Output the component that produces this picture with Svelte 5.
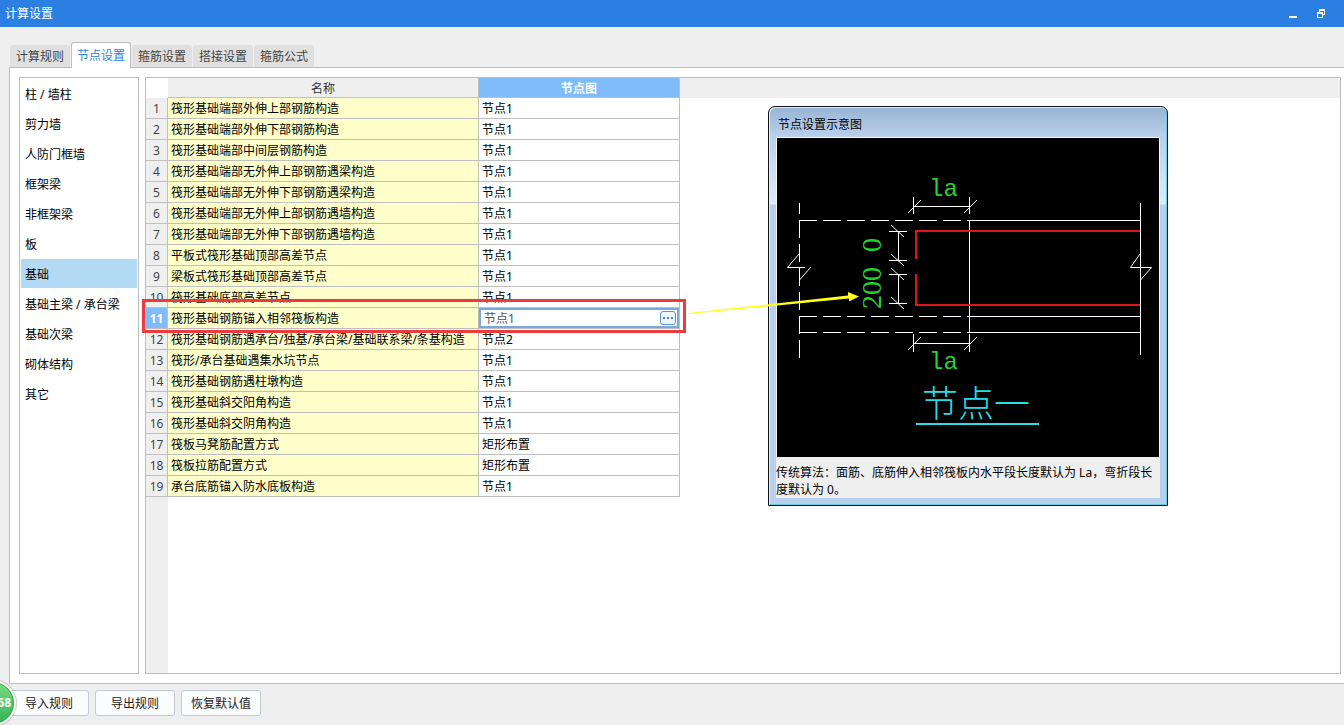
<script lang="ts">
    type Row = { name: string; value: string }

    const tabs = ['计算规则', '节点设置', '箍筋设置', '搭接设置', '箍筋公式']
    const categories = [
        '柱 / 墙柱', '剪力墙', '人防门框墙', '框架梁', '非框架梁', '板',
        '基础', '基础主梁 / 承台梁', '基础次梁', '砌体结构', '其它',
    ]

    let rows = $state<Row[]>([
        { name: '筏形基础端部外伸上部钢筋构造', value: '节点1' },
        { name: '筏形基础端部外伸下部钢筋构造', value: '节点1' },
        { name: '筏形基础端部中间层钢筋构造', value: '节点1' },
        { name: '筏形基础端部无外伸上部钢筋遇梁构造', value: '节点1' },
        { name: '筏形基础端部无外伸下部钢筋遇梁构造', value: '节点1' },
        { name: '筏形基础端部无外伸上部钢筋遇墙构造', value: '节点1' },
        { name: '筏形基础端部无外伸下部钢筋遇墙构造', value: '节点1' },
        { name: '平板式筏形基础顶部高差节点', value: '节点1' },
        { name: '梁板式筏形基础顶部高差节点', value: '节点1' },
        { name: '筏形基础底部高差节点', value: '节点1' },
        { name: '筏形基础钢筋锚入相邻筏板构造', value: '节点1' },
        { name: '筏形基础钢筋遇承台/独基/承台梁/基础联系梁/条基构造', value: '节点2' },
        { name: '筏形/承台基础遇集水坑节点', value: '节点1' },
        { name: '筏形基础钢筋遇柱墩构造', value: '节点1' },
        { name: '筏形基础斜交阳角构造', value: '节点1' },
        { name: '筏形基础斜交阴角构造', value: '节点1' },
        { name: '筏板马凳筋配置方式', value: '矩形布置' },
        { name: '筏板拉筋配置方式', value: '矩形布置' },
        { name: '承台底筋锚入防水底板构造', value: '节点1' },
    ])

    let activeTab = $state(1)
    let activeCategory = $state(6)
    let selectedRow = $state(10)
</script>

<div class="window">
    <header class="titlebar">
        <h1>计算设置</h1>
        <div class="win-buttons">
            <button aria-label="最小化">
                <svg width="10" height="10" viewBox="0 0 10 10"><path d="M1 7h8v2H1z" fill="#fff" /></svg>
            </button>
            <button aria-label="还原">
                <svg width="10" height="10" viewBox="0 0 10 10" fill="#fff" shape-rendering="crispEdges">
                    <path fill-rule="evenodd" d="M3 0h6v6H7V5h1V2H4v1H3z" />
                    <path fill-rule="evenodd" d="M1 3h6v6H1zM2 5v3h4V5z" />
                </svg>
            </button>
        </div>
    </header>

    <div class="tabs" role="tablist">
        {#each tabs as tab, i}
            <button
                role="tab"
                class:active={activeTab === i}
                aria-selected={activeTab === i}
                onclick={() => (activeTab = i)}
            >{tab}</button>
        {/each}
    </div>

    <main class="panel">
        <nav class="sidebar">
            {#each categories as category, i}
                <button class:active={activeCategory === i} onclick={() => (activeCategory = i)}>{category}</button>
            {/each}
        </nav>

        <section class="workspace">
            <div class="grid">
                <table>
                    <thead>
                        <tr>
                            <td class="corner"></td>
                            <th class="col-name">名称</th>
                            <th class="col-value">节点图</th>
                        </tr>
                    </thead>
                    <tbody>
                        {#each rows as row, i}
                            <tr class:selected={selectedRow === i} onclick={() => (selectedRow = i)}>
                                <td class="num">
                                    {i + 1}
                                    {#if selectedRow === i}<span class="frame"></span>{/if}
                                </td>
                                <td class="name">{row.name}</td>
                                <td class="value">
                                    {#if selectedRow === i}
                                        <div class="editor">
                                            <input type="text" aria-label={row.name} bind:value={row.value} />
                                            <button aria-label="选择节点图">
                                                <svg width="10" height="2" viewBox="0 0 10 2" fill="#4a86c8">
                                                    <path d="M0 0h2v2H0zM4 0h2v2H4zM8 0h2v2H8z" />
                                                </svg>
                                            </button>
                                        </div>
                                    {:else}
                                        {row.value}
                                    {/if}
                                </td>
                            </tr>
                        {/each}
                    </tbody>
                </table>
                <div class="gutter"></div>
            </div>
            <div class="strip"></div>

            <aside class="dialog">
                <h2>节点设置示意图</h2>
                <svg class="drawing" viewBox="0 0 382 319" fill="none">
                    <g stroke="#fff">
                        <!-- slab outline -->
                        <path d="M22.500 65v11M22.500 82v138" stroke-dasharray="18 6" />
                        <path d="M22 82.500h171M22 178.500h171M22 194.500h171" stroke-dasharray="18 6" />
                        <path d="M192 82.500h171M192 178.500h171M192 194.500h171M192.500 82v113M363.500 65v152" />
                        <path d="M22 116L10.500 129.500H28M34 129L22.500 142" />
                        <path d="M363 116L353.500 129.500H374.500L363.500 142" />
                        <!-- horizontal dimensions -->
                        <path d="M136.500 59v17M192.500 59v17M136 68.500h57M131 75l13-13M187 75l13-13" />
                        <path d="M136.500 196v18M192.500 196v18M136 205.500h57M131 212l13-13M187 212l13-13" />
                        <!-- vertical dimensions -->
                        <path d="M112 93.500h18M112 122.500h18M121.500 93v30M114 87l13 12M114 116l13 12" />
                        <path d="M112 136.500h18M112 165.500h18M121.500 136v30M114 130l13 12M114 159l13 12" />
                    </g>
                    <path d="M363 93H139v28M139 136v31h224" stroke="#e01616" stroke-width="2" />
                    <g class="dim">
                        <text x="152" y="58">la</text>
                        <text x="152" y="231">la</text>
                        <text class="digits" transform="translate(104 114) rotate(-90)">0</text>
                        <text class="digits" transform="translate(104 171) rotate(-90)">200</text>
                    </g>
                    <text class="caption" x="145" y="279">节点一</text>
                    <path d="M139 286h123" stroke="#22dfe8" stroke-width="2" />
                </svg>
                <p>传统算法：面筋、底筋伸入相邻筏板内水平段长度默认为 La，弯折段长度默认为 0。</p>
            </aside>

            <svg class="arrow" width="172" height="25" viewBox="0 0 172 25" fill="#ffff1a">
                <path d="M0 23L160 5.500V2L171 6.500L161 11.500V8.500L0 24z" />
            </svg>
        </section>
    </main>

    <footer>
        <button>导入规则</button>
        <button>导出规则</button>
        <button>恢复默认值</button>
        <span class="badge">68</span>
    </footer>
</div>

<style>
    :global(body) { margin: 0; }

    .window {
        box-sizing: border-box;
        display: flex;
        flex-direction: column;
        min-height: 100vh;
        overflow: hidden;
        background: #efefef;
        font: 12px/18px "Noto Sans", "Noto Sans CJK SC", sans-serif;
        color: #000;
    }
    button, input { font: inherit; margin: 0; }
    button { cursor: pointer; }
    h1, h2, p { margin: 0; font: inherit; }

    .titlebar {
        display: flex;
        align-items: center;
        justify-content: space-between;
        height: 27px;
        padding: 0 18px 0 5px;
        background: #2b7fe3;
        color: #fff;
    }
    .win-buttons { display: flex; gap: 18px; }
    .win-buttons button {
        display: flex;
        padding: 0;
        border: 0;
        background: none;
    }

    .tabs {
        display: flex;
        align-items: flex-end;
        gap: 1px;
        height: 25px;
        margin-top: 16px;
        padding-left: 10px;
        z-index: 1;
    }
    .tabs button {
        box-sizing: border-box;
        height: 22px;
        margin-bottom: 1px;
        padding: 2px 6px 0;
        border: 0;
        border-radius: 3px 3px 0 0;
        background: #e0e0e0;
        color: #444;
    }
    .tabs button.active {
        height: 26px;
        margin-bottom: 0;
        padding: 0 6px;
        border: 1px solid #bdbdbd;
        border-bottom: 0;
        padding: 0 5px;
        background: #fff;
        color: #2b7fe3;
    }

    .panel {
        flex: 1;
        display: flex;
        gap: 6px;
        margin: -1px 0 0 9px;
        padding: 9px 3px 9px 9px;
        border: 1px solid #bdbdbd;
        border-right: 0;
        background: #fff;
    }

    .sidebar {
        box-sizing: border-box;
        display: flex;
        flex-direction: column;
        gap: 1px;
        width: 120px;
        padding: 1px;
        border: 1px solid #bdbdbd;
    }
    .sidebar button {
        box-sizing: border-box;
        height: 29px;
        padding: 2px 4px 0;
        border: 0;
        background: none;
        color: #000;
        text-align: left;
        white-space: nowrap;
    }
    .sidebar button.active { background: #b3daf4; }

    .workspace {
        position: relative;
        flex: 1;
        display: flex;
        border: 1px solid #bdbdbd;
    }
    .strip { flex: 1; height: 20px; background: #efefef; }
    .grid { display: flex; flex-direction: column; }
    .gutter { flex: 1; width: 22px; background: #efefef; }

    table {
        width: 534px;
        table-layout: fixed;
        border-collapse: separate;
        border-spacing: 0;
        line-height: 16px;
    }
    th, td {
        box-sizing: border-box;
        height: 21px;
        padding: 2px 3px 0;
        border: solid #bfbfbf;
        border-width: 0 1px 1px 0;
        white-space: nowrap;
    }
    th, .corner { height: 20px; }
    th { background: #efefef; color: #333; font-weight: 400; }
    .corner { width: 22px; border: 0; }
    .col-name { width: 311px; }
    .col-value { background: #80bcfb; color: #fff; font-weight: 700; }
    .num { padding: 2px 0 0; background: #efefef; color: #444; text-align: center; }
    .name { background: #ffffcb; }
    .value { background: #fff; }

    tr.selected { position: relative; }
    tr.selected .num { background: #80bcfb; color: #fff; font-weight: 700; }
    tr.selected .value { padding: 0; }
    .frame {
        position: absolute;
        inset: -9px -6px -4px -4px;
        border: 3px solid #ed3b3b;
        pointer-events: none;
    }

    .editor {
        box-sizing: border-box;
        display: flex;
        align-items: center;
        height: 20px;
        padding-right: 1px;
        border: 2px solid #78a8de;
    }
    .editor input {
        flex: 1;
        box-sizing: border-box;
        min-width: 0;
        height: 16px;
        padding: 1px 3px 0;
        border: 0;
        outline: 0;
        background: none;
        color: #555;
    }
    .editor button {
        box-sizing: border-box;
        display: flex;
        align-items: center;
        justify-content: center;
        width: 16px;
        height: 14px;
        padding: 0;
        border: 1px solid #5b95d0;
        border-radius: 3px;
        background: #edf5fd;
    }

    .dialog {
        position: absolute;
        top: 28px;
        left: 622px;
        box-sizing: border-box;
        width: 400px;
        padding: 0 7px 7px;
        border: 1px solid #111;
        border-radius: 7px 7px 0 0;
        background: linear-gradient(#98b4d4, #bad0ea 30px, #dfeafa 97px, #b7cfea 98px);
        box-shadow: inset 1px 1px #e4eefa, inset -1px -1px #62cbe0;
    }
    .dialog h2 { padding: 9px 2px 3px; }
    .drawing {
        display: block;
        width: 100%;
        box-sizing: border-box;
        border: solid #f4f7fb;
        border-width: 1px 1px 0;
        background: #000;
    }
    .dialog p { padding: 7px 0 0; background: #efefef; line-height: 17px; }
    .dim { fill: #22d42e; font: 24px "Liberation Mono", monospace; }
    .digits { font: 28px "Liberation Serif", serif; }
    .caption { fill: #22dfe8; font: 300 36px "Noto Sans CJK SC", sans-serif; }

    .arrow { position: absolute; top: 212px; left: 542px; }

    footer {
        position: relative;
        display: flex;
        gap: 6px;
        padding: 6px 9px 9px;
    }
    footer button {
        box-sizing: border-box;
        width: 80px;
        height: 26px;
        padding: 2px 0 0;
        border: 1px solid #c3cad6;
        border-radius: 3px;
        background: #fbfcfe;
        color: #222;
    }
    .badge {
        position: absolute;
        top: -4px;
        left: -30px;
        box-sizing: border-box;
        width: 46px;
        height: 46px;
        padding-right: 3px;
        border: 2px solid #f4f4f4;
        border-radius: 50%;
        background: linear-gradient(#7cdb7c, #2fb457);
        box-shadow: 0 0 2px #666, inset 0 0 0 1px #2f9a4f;
        color: #fff;
        font-weight: 700;
        line-height: 42px;
        text-align: right;
    }
</style>
